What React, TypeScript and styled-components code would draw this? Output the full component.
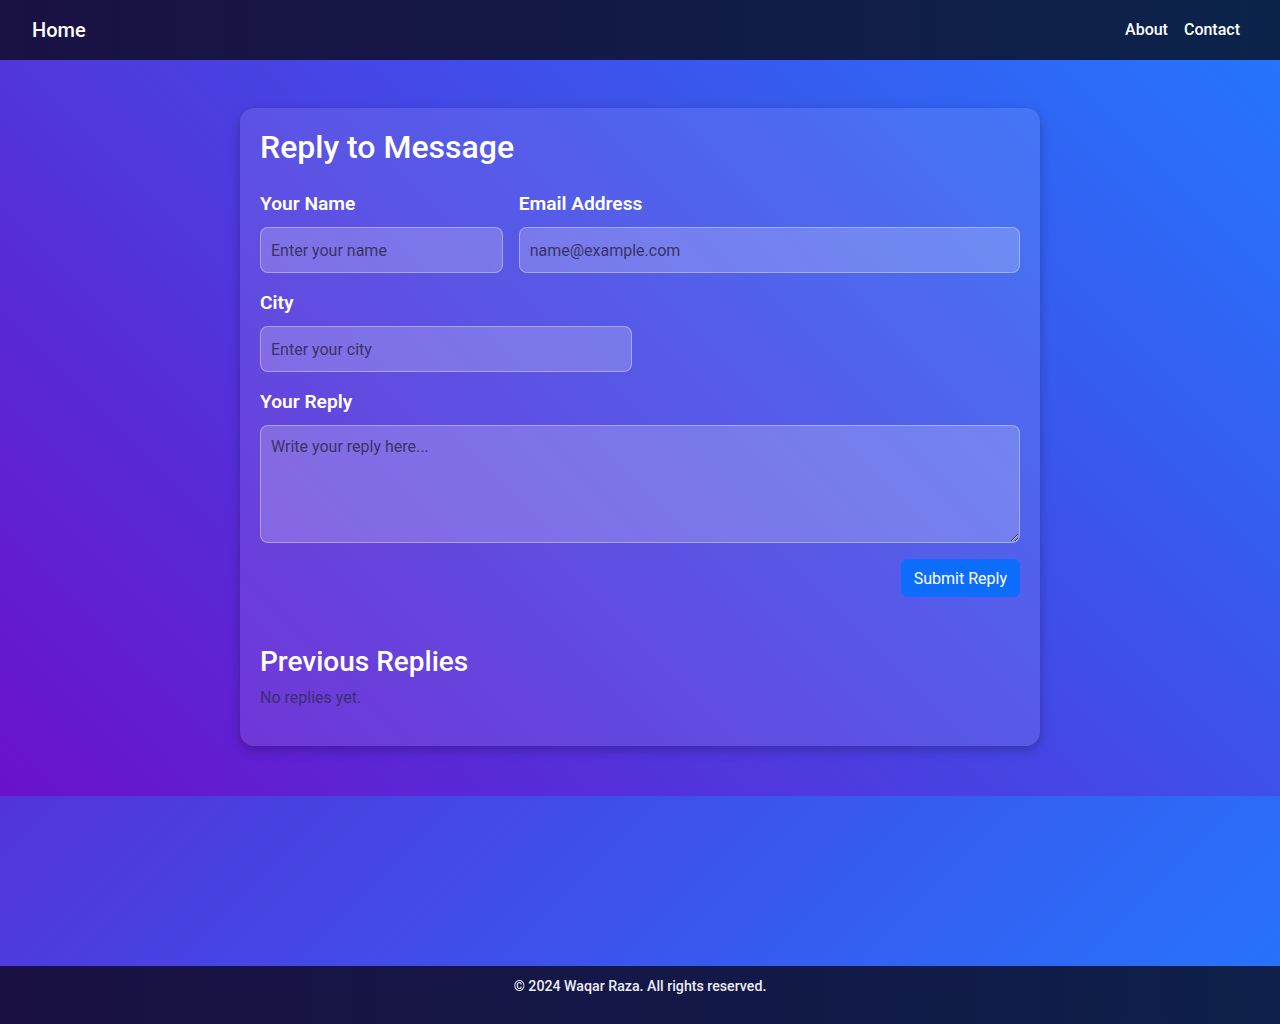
import React from "react";
import styled, { createGlobalStyle } from "styled-components";

const GlobalStyle = createGlobalStyle`
  * { box-sizing: border-box; }
  html, body { margin: 0; padding: 0; }
  body {
    font-family: Roboto, "Liberation Sans", Arial, sans-serif;
    min-height: 100vh;
    background: linear-gradient(135deg, #6a11cb 0%, #2575fc 100%);
    color: #fff;
  }
  #root { min-height: 100vh; display: flex; flex-direction: column; }
`;

const Header = styled.header`
  height: 60px;
  display: flex;
  align-items: center;
  justify-content: space-between;
  padding: 0 40px 0 32px;
  background: linear-gradient(90deg, #1a1144 0%, #0b234a 100%);
`;

const Brand = styled.a`
  color: #fff;
  font-size: 20px;
  font-weight: 500;
  text-decoration: none;
`;

const NavList = styled.nav`
  display: flex;
  gap: 16px;
  margin-top: -2px;
`;

const NavLink = styled.a`
  color: #fff;
  font-size: 16px;
  font-weight: 500;
  text-decoration: none;
`;

const Main = styled.main`
  padding: 48px 0 50px;
  background: linear-gradient(45deg, #6a11cb 0%, #2575fc 100%);
  display: flex;
  justify-content: center;
`;

const Card = styled.section`
  width: 800px;
  padding: 20px;
  border-radius: 14px;
  background: rgba(255, 255, 255, 0.1);
  box-shadow: 0 4px 12px rgba(0, 0, 0, 0.25);
`;

const Title = styled.h1`
  margin: 0 0 26px;
  font-size: 32px;
  font-weight: 500;
  line-height: 38px;
`;

const FormGrid = styled.form`
  display: grid;
  grid-template-columns: repeat(6, 1fr);
  column-gap: 16px;
`;

const Field = styled.div<{ $span: number; $last?: boolean }>`
  grid-column: span ${(p) => p.$span};
  display: flex;
  flex-direction: column;
  margin-bottom: ${(p) => (p.$last ? "16px" : "18px")};
`;

const Spacer = styled.div<{ $span: number }>`
  grid-column: span ${(p) => p.$span};
`;

const Label = styled.label`
  font-size: 19.2px;
  font-weight: 600;
  line-height: 23px;
  margin-bottom: 12px;
`;

const inputBase = `
  width: 100%;
  font-family: Roboto, "Liberation Sans", Arial, sans-serif;
  font-size: 16px;
  color: #fff;
  background: rgba(255, 255, 255, 0.2);
  border: 1px solid rgba(255, 255, 255, 0.35);
  border-radius: 8px;
  padding: 0 10px;
  outline: none;
  &::placeholder { color: #3b3366; opacity: 1; }
`;

const Input = styled.input`
  ${inputBase}
  height: 46px;
`;

const TextArea = styled.textarea`
  ${inputBase}
  height: 118px;
  padding-top: 11px;
  line-height: 20px;
  display: block;
`;

const Actions = styled.div`
  grid-column: span 6;
  display: flex;
  justify-content: flex-end;
`;

const SubmitButton = styled.button`
  height: 38px;
  padding: 0 13px;
  font-family: Roboto, "Liberation Sans", Arial, sans-serif;
  font-size: 16px;
  color: #fff;
  background: #0d6efd;
  border: none;
  border-radius: 6px;
  cursor: pointer;
`;

const SubTitle = styled.h2`
  margin: 48px 0 8px;
  font-size: 28px;
  font-weight: 500;
  line-height: 34px;
`;

const Empty = styled.p`
  margin: 0 0 17px;
  font-size: 16px;
  line-height: 22px;
  color: #3c2e74;
`;

const Footer = styled.footer`
  margin-top: auto;
  height: 58px;
  padding-top: 10px;
  text-align: center;
  background: linear-gradient(90deg, #1a1044 0%, #0d1f4a 100%);
`;

const FooterText = styled.p`
  margin: 0;
  font-size: 14.2px;
  font-weight: 500;
  line-height: 20px;
  color: #ececf4;
`;

export default function App() {
  return (
    <>
      <GlobalStyle />
      <Header>
        <Brand href="#">Home</Brand>
        <NavList>
          <NavLink href="#">About</NavLink>
          <NavLink href="#">Contact</NavLink>
        </NavList>
      </Header>
      <Main>
        <Card>
          <Title>Reply to Message</Title>
          <FormGrid onSubmit={(e) => e.preventDefault()}>
            <Field $span={2}>
              <Label>Your Name</Label>
              <Input placeholder="Enter your name" />
            </Field>
            <Field $span={4}>
              <Label>Email Address</Label>
              <Input placeholder="name@example.com" />
            </Field>
            <Field $span={3}>
              <Label>City</Label>
              <Input placeholder="Enter your city" />
            </Field>
            <Spacer $span={3} />
            <Field $span={6} $last>
              <Label>Your Reply</Label>
              <TextArea placeholder="Write your reply here..." />
            </Field>
            <Actions>
              <SubmitButton type="submit">Submit Reply</SubmitButton>
            </Actions>
          </FormGrid>
          <SubTitle>Previous Replies</SubTitle>
          <Empty>No replies yet.</Empty>
        </Card>
      </Main>
      <Footer>
        <FooterText>© 2024 Waqar Raza. All rights reserved.</FooterText>
      </Footer>
    </>
  );
}
